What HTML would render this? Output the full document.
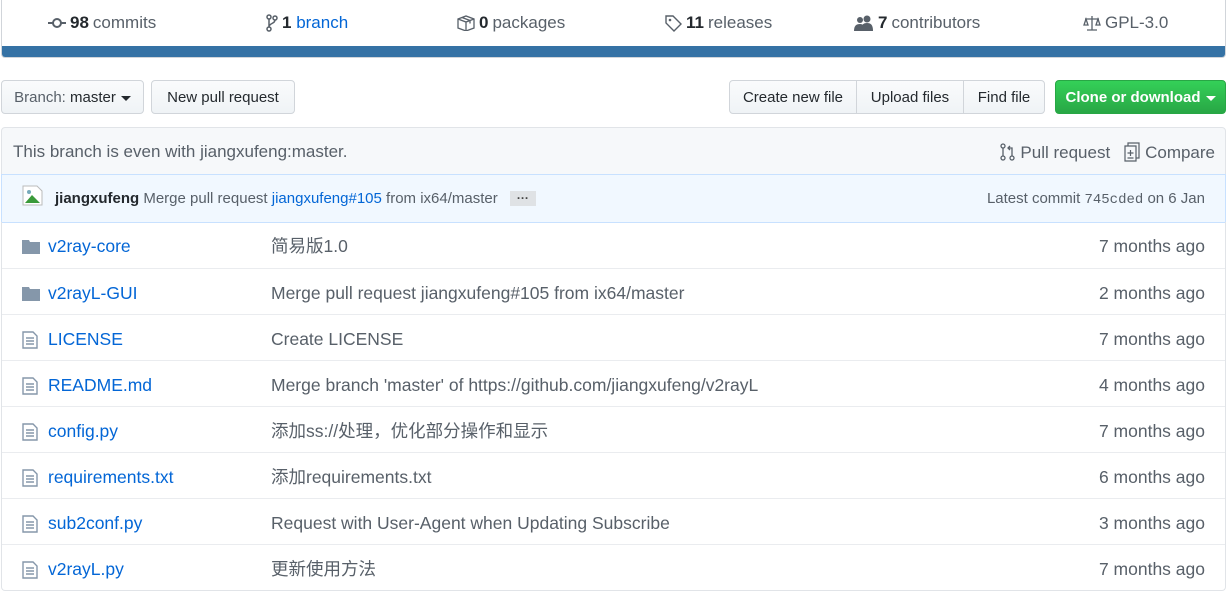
<!DOCTYPE html>
<html><head><meta charset="utf-8"><style>
*{box-sizing:border-box;margin:0;padding:0}
body{width:1231px;height:593px;background:#fff;font-family:"Liberation Sans","Noto Sans CJK SC",sans-serif;color:#24292e;position:relative;overflow:hidden}
.abs{position:absolute}
.stats{left:1px;top:-2px;width:1225px;height:60px;border:1px solid #d1d5da;border-top:none;border-radius:0 0 4px 4px;overflow:hidden}
.bar{left:0;right:0;bottom:0;height:11px;background:#3572a5}
.st{top:15px;font-size:17px;color:#586069;white-space:nowrap;display:flex;align-items:center;gap:4px}
.st b{color:#24292e;font-weight:bold}
.blue{color:#0366d6}
.btn{top:80px;height:34px;border:1px solid #d1d5da;background:linear-gradient(#fafbfc,#eff3f6);font-size:15px;display:flex;align-items:center;justify-content:center;color:#24292e;border-radius:4px}
.green{background:linear-gradient(#34d058,#28a745);border-color:#28a745;color:#fff;font-weight:bold}
.caret{display:inline-block;border:5px solid transparent;border-top:5px solid currentColor;border-bottom:0;margin-left:5px;margin-top:2px}
.info{left:1px;top:127px;width:1225px;height:48px;background:#f6f8fa;border:1px solid #e1e4e8;border-radius:4px 4px 0 0;font-size:17px;color:#586069}
.commit{left:1px;top:174px;width:1225px;height:49px;background:#f1f8ff;border:1px solid #c8e1ff;font-size:15px;color:#586069}
.files{left:1px;top:222px;width:1225px;height:369px;border:1px solid #e1e4e8;border-top:none;border-radius:0 0 4px 4px}
.row{position:absolute;left:0;right:0;height:46px;border-top:1px solid #eaecef;font-size:17.5px}
.row span{line-height:22px;height:22px;white-space:nowrap}
.row .n{position:absolute;left:46px;top:13px;color:#0366d6}
.row .m{position:absolute;left:269px;top:13px;color:#586069}
.row .a{position:absolute;right:20px;top:13px;color:#586069}
.row svg{position:absolute;left:20px;top:16px}
</style></head><body>
<div class="abs stats">
 <div class="abs st" style="left:46px"><svg width="18" height="12" viewBox="0 0 18 12"><circle cx="9" cy="6" r="4" fill="none" stroke="#586069" stroke-width="2"/><path d="M0 6h5M13 6h5" stroke="#586069" stroke-width="2"/></svg><b>98</b> commits</div>
 <div class="abs st" style="left:264px"><svg width="12" height="18" viewBox="0 0 12 18"><circle cx="3" cy="3" r="2" fill="none" stroke="#586069" stroke-width="1.5"/><circle cx="3" cy="15" r="2" fill="none" stroke="#586069" stroke-width="1.5"/><circle cx="9" cy="4" r="2" fill="none" stroke="#586069" stroke-width="1.5"/><path d="M3 5v8M9 6c0 4-6 3-6 7" fill="none" stroke="#586069" stroke-width="1.5"/></svg><span class="blue"><b class="blue">1</b> branch</span></div>
 <div class="abs st" style="left:455px"><svg width="18" height="16" viewBox="0 0 18 16"><path d="M1 4l8-3 8 3v9l-8 3-8-3zM1 4l8 3 8-3M9 7v9M5 2.5l8 3v3" fill="none" stroke="#586069" stroke-width="1.3"/></svg><b>0</b> packages</div>
 <div class="abs st" style="left:663px"><svg width="17" height="17" viewBox="0 0 17 17"><path d="M1 1h7l8 8-7 7-8-8z" fill="none" stroke="#586069" stroke-width="1.4"/><circle cx="5" cy="5" r="1.3" fill="#586069"/></svg><b>11</b> releases</div>
 <div class="abs st" style="left:852px"><svg width="20" height="16" viewBox="0 0 20 16"><circle cx="13" cy="4" r="3.5" fill="#586069"/><path d="M7 16c0-6 2-8 6-8s6 2 6 8z" fill="#586069"/><circle cx="6" cy="5" r="3" fill="#586069"/><path d="M0 16c0-5 2-7 6-7 2 0 3 1 3 1l-1 6z" fill="#586069"/></svg><b>7</b> contributors</div>
 <div class="abs st" style="left:1081px"><svg width="18" height="16" viewBox="0 0 18 16"><path d="M9 1v14M4 15h10M2 4h14M3 4l-2 6h4zM15 4l-2 6h4z" fill="none" stroke="#586069" stroke-width="1.3"/></svg>GPL-3.0</div>
 <div class="abs bar"></div>
</div>
<div class="abs btn" style="left:1px;width:143px"><span style="color:#586069">Branch:&nbsp;</span>master<span class="caret"></span></div>
<div class="abs btn" style="left:151px;width:144px">New pull request</div>
<div class="abs btn" style="left:729px;width:128px;border-radius:4px 0 0 4px">Create new file</div>
<div class="abs btn" style="left:856px;width:108px;border-radius:0">Upload files</div>
<div class="abs btn" style="left:963px;width:82px;border-radius:0 4px 4px 0">Find file</div>
<div class="abs btn green" style="left:1055px;width:171px">Clone or download<span class="caret"></span></div>
<div class="abs info"><span class="abs" style="left:11px;top:14px">This branch is even with jiangxufeng:master.</span>
 <span class="abs" style="right:10px;top:14px;white-space:nowrap">
 <svg width="16" height="18" viewBox="0 0 16 18" style="vertical-align:-3px"><circle cx="3" cy="3" r="2" fill="none" stroke="#586069" stroke-width="1.3"/><circle cx="3" cy="15" r="2" fill="none" stroke="#586069" stroke-width="1.3"/><circle cx="12" cy="15" r="2" fill="none" stroke="#586069" stroke-width="1.3"/><path d="M3 5v8M12 13V5H8M10 3L8 5l2 2" fill="none" stroke="#586069" stroke-width="1.3"/></svg> Pull request &nbsp;
 <svg width="16" height="20" viewBox="0 0 16 20" style="vertical-align:-4px"><path d="M1 4h11v15H1zM4 4V1h11v15h-3M6.5 8v6M3.5 11h6M3.5 16h6" fill="none" stroke="#586069" stroke-width="1.2"/></svg> Compare</span></div>
<div class="abs commit">
 <svg class="abs" style="left:20px;top:10px" width="22" height="24" viewBox="0 0 22 24"><path d="M1 1h14l5 5v14H1z" fill="#fff" stroke="#bbb"/><path d="M3 18l7-8 8 8z" fill="#3a9a3a"/><circle cx="7" cy="7" r="2" fill="#7ab"/></svg>
 <span class="abs" style="left:53px;top:15px;white-space:nowrap"><b style="color:#24292e">jiangxufeng</b> Merge pull request <span class="blue">jiangxufeng#105</span> from ix64/master <span style="display:inline-block;background:#dfe2e5;color:#444;font-size:12px;padding:0 7px;line-height:15px;margin-left:8px;vertical-align:1px;font-weight:bold">···</span></span>
 <span class="abs" style="right:20px;top:15px;white-space:nowrap">Latest commit <span style="font-family:'Liberation Mono',monospace;font-size:14px">745cded</span> on 6 Jan</span>
</div>
<div class="abs files">
 <div class="row" style="top:0;border-top:none"><svg width="18" height="16" viewBox="0 0 18 16"><path d="M0 2h7l1 2h10v12H0z" fill="#8597aa"/></svg><span class="n">v2ray-core</span><span class="m">简易版1.0</span><span class="a">7 months ago</span></div>
 <div class="row" style="top:46px"><svg width="18" height="16" viewBox="0 0 18 16"><path d="M0 2h7l1 2h10v12H0z" fill="#8597aa"/></svg><span class="n">v2rayL-GUI</span><span class="m">Merge pull request jiangxufeng#105 from ix64/master</span><span class="a">2 months ago</span></div>
 <div class="row" style="top:92px"><svg width="16" height="18" viewBox="0 0 16 18"><path d="M1 1h10l4 4v12H1zM4 7h8M4 10h8M4 13h8" fill="none" stroke="#8597aa" stroke-width="1.4"/></svg><span class="n">LICENSE</span><span class="m">Create LICENSE</span><span class="a">7 months ago</span></div>
 <div class="row" style="top:138px"><svg width="16" height="18" viewBox="0 0 16 18"><path d="M1 1h10l4 4v12H1zM4 7h8M4 10h8M4 13h8" fill="none" stroke="#8597aa" stroke-width="1.4"/></svg><span class="n">README.md</span><span class="m">Merge branch 'master' of https://github.com/jiangxufeng/v2rayL</span><span class="a">4 months ago</span></div>
 <div class="row" style="top:184px"><svg width="16" height="18" viewBox="0 0 16 18"><path d="M1 1h10l4 4v12H1zM4 7h8M4 10h8M4 13h8" fill="none" stroke="#8597aa" stroke-width="1.4"/></svg><span class="n">config.py</span><span class="m">添加ss://处理，优化部分操作和显示</span><span class="a">7 months ago</span></div>
 <div class="row" style="top:230px"><svg width="16" height="18" viewBox="0 0 16 18"><path d="M1 1h10l4 4v12H1zM4 7h8M4 10h8M4 13h8" fill="none" stroke="#8597aa" stroke-width="1.4"/></svg><span class="n">requirements.txt</span><span class="m">添加requirements.txt</span><span class="a">6 months ago</span></div>
 <div class="row" style="top:276px"><svg width="16" height="18" viewBox="0 0 16 18"><path d="M1 1h10l4 4v12H1zM4 7h8M4 10h8M4 13h8" fill="none" stroke="#8597aa" stroke-width="1.4"/></svg><span class="n">sub2conf.py</span><span class="m">Request with User-Agent when Updating Subscribe</span><span class="a">3 months ago</span></div>
 <div class="row" style="top:322px"><svg width="16" height="18" viewBox="0 0 16 18"><path d="M1 1h10l4 4v12H1zM4 7h8M4 10h8M4 13h8" fill="none" stroke="#8597aa" stroke-width="1.4"/></svg><span class="n">v2rayL.py</span><span class="m">更新使用方法</span><span class="a">7 months ago</span></div>
</div>
</body></html>
